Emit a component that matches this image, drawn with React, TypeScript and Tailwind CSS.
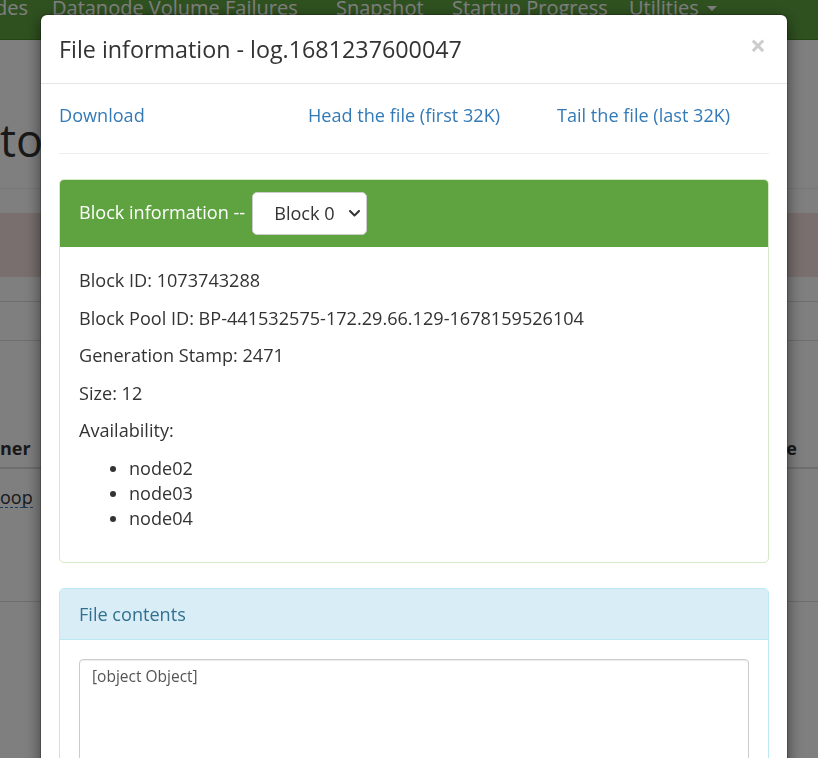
import React, { FC } from 'react';

const NAV_ITEMS = [
  { label: 'Datanode Volume Failures', width: 'w-[284px]' },
  { label: 'Snapshot', width: 'w-[116px]' },
  { label: 'Startup Progress', width: 'w-[177px]' },
];

const BLOCK_FIELDS = [
  ['Block ID', '1073743288'],
  ['Block Pool ID', 'BP-441532575-172.29.66.129-1678159526104'],
  ['Generation Stamp', '2471'],
  ['Size', '12'],
];

const NODES = ['node02', 'node03', 'node04'];

const Chevron: FC = () => (
  <svg width="11" height="7" viewBox="0 0 11 7" className="ml-auto">
    <polyline
      points="1,1 5.5,5.5 10,1"
      fill="none"
      stroke="#333"
      strokeWidth="2"
      strokeLinecap="round"
      strokeLinejoin="round"
    />
  </svg>
);

// page that sits behind the modal backdrop
const PageBehind: FC = () => (
  <div className="h-[758px] overflow-hidden bg-white text-[#333]">
    <nav className="h-10 bg-[#5fa341] border-b border-[#4a8a30] overflow-hidden">
      <div className="flex items-center -mt-[5px] text-[20px] leading-[25px] text-white whitespace-nowrap">
        <div className="-ml-[300px] w-[352px] flex justify-end pr-[24px]">Datanodes</div>
        {NAV_ITEMS.map(item => (
          <div key={item.label} className={item.width}>
            {item.label}
          </div>
        ))}
        <div className="flex items-center gap-2">
          Utilities
          <span className="w-0 h-0 border-x-[5px] border-x-transparent border-t-[5px] border-t-white mt-[2px]" />
        </div>
      </div>
    </nav>

    <div className="h-[149px] border-b border-[#eee] flex items-start pt-[75px]">
      <h1 className="flex text-[45px] leading-[50px] whitespace-nowrap">
        <span className="-ml-[400px] w-[400px] flex justify-end">Browse Direc</span>
        <span>tory</span>
      </h1>
    </div>

    <div className="mt-[24px] h-[64px] bg-[#f2dede]" />
    <div className="mt-[24px] border-b border-[#ddd]" />
    <div className="mt-[38px] border-b border-[#ddd]" />

    <div className="mt-[88px] h-[38px] flex justify-between items-center font-bold text-[18px] whitespace-nowrap">
      <div className="flex">
        <span className="-ml-[200px] w-[200px] flex justify-end">Ow</span>
        <span>ner</span>
      </div>
      <span className="mr-[21px]">Name</span>
    </div>
    <div className="border-b-2 border-[#ddd]" />
    <div className="mt-[18px] flex text-[18px] leading-[20px] whitespace-nowrap">
      <span className="-ml-[200px] w-[200px] flex justify-end">had</span>
      <span className="border-b border-dashed border-[#337ab7]">oop</span>
    </div>
    <div className="mt-[93px] border-b border-[#ddd]" />
  </div>
);

const BlockInfoPanel: FC = () => (
  <div className="rounded-[5px] border border-[#d6e9c6] overflow-hidden">
    <div className="flex items-center gap-[7px] bg-[#5fa341] px-[19px] py-[12px] text-white">
      <span className="-mt-[3px]">Block information --</span>
      <div className="flex items-center h-[43px] w-[115px] rounded-[5px] border border-[#ccc] bg-white pl-[21px] pr-[6px] text-[#333]">
        <span>Block 0</span>
        <Chevron />
      </div>
    </div>
    <div className="px-[19px] pt-[21px] pb-[19px]">
      {BLOCK_FIELDS.map(([label, value]) => (
        <p key={label} className="mb-[12.5px]">
          {label}: {value}
        </p>
      ))}
      <p className="mb-[12.5px]">Availability:</p>
      <ul className="list-disc pl-[50px] mb-[12.5px]">
        {NODES.map(n => (
          <li key={n}>{n}</li>
        ))}
      </ul>
    </div>
  </div>
);

const FileContentsPanel: FC = () => (
  <div className="mt-[25px] rounded-[5px] border border-[#bce8f1] overflow-hidden">
    <div className="bg-[#d9edf7] border-b border-[#bce8f1] px-[19px] py-[12.5px] text-[#31708f]">
      File contents
    </div>
    <div className="p-[19px]">
      <div className="h-[188px] rounded-[4px] border border-[#ccc] shadow-[inset_0_1px_1px_rgba(0,0,0,0.075)] px-[12px] py-[6px] text-[15.5px] leading-[21px] text-[#555]">
        [object Object]
      </div>
    </div>
  </div>
);

const FileInfoModal: FC = () => (
  <div className="fixed inset-0 overflow-hidden">
    <div className="ml-[40px] mt-[14px] w-[748px] rounded-[7px] border border-black/20 bg-white bg-clip-padding shadow-[0_5px_15px_rgba(0,0,0,0.5)] text-[#333]">
      <div className="flex items-center justify-between border-b border-[#e5e5e5] px-[18px] py-[18px]">
        <h4 className="text-[23.3px] leading-[32px]">File information - log.1681237600047</h4>
        <span className="text-[28px] leading-none font-bold text-black/20 mr-[3px] -mt-[9px]">×</span>
      </div>
      <div className="py-[19px] px-[18px] pb-[40px]">
        <div className="flex text-[#337ab7] leading-[25px]">
          <a className="w-[249px]">Download</a>
          <a className="w-[249px]">Head the file (first 32K)</a>
          <a>Tail the file (last 32K)</a>
        </div>
        <hr className="my-[25px] border-t border-[#eee]" />
        <BlockInfoPanel />
        <FileContentsPanel />
      </div>
    </div>
  </div>
);

export default function App() {
  return (
    <div className="relative h-[758px] overflow-hidden font-['Open_Sans',sans-serif] text-[18.1px] leading-[25px]">
      <PageBehind />
      <div className="fixed inset-0 bg-black/50" />
      <FileInfoModal />
    </div>
  );
}
